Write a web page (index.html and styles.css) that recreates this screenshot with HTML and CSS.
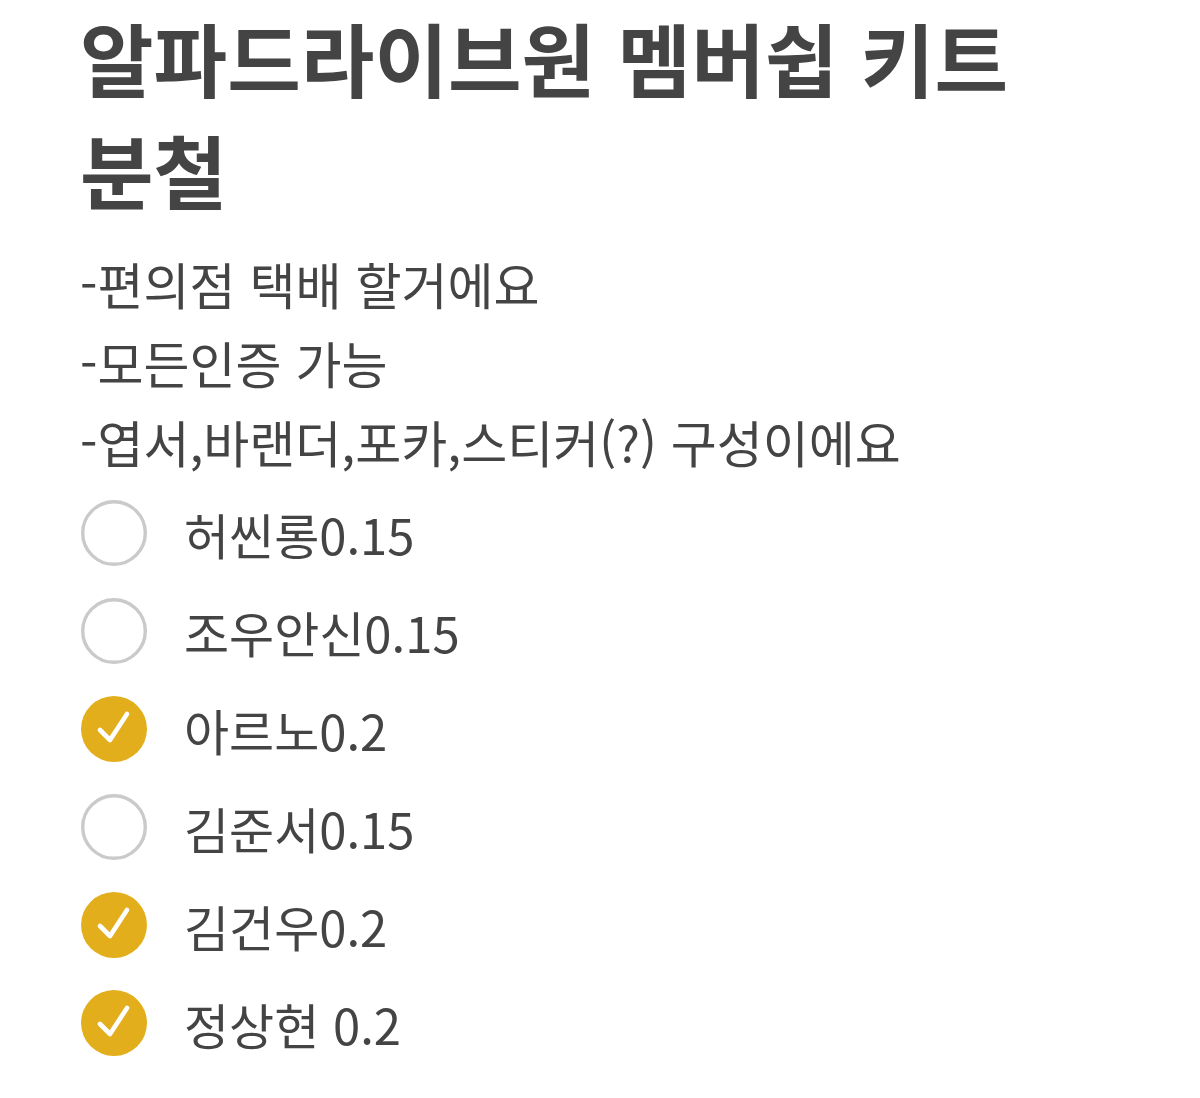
FILE: index.html
```html
<!DOCTYPE html>
<html lang="ko">
<head>
<meta charset="utf-8">
<title>알파드라이브원 멤버쉽 키트 분철</title>
<link rel="stylesheet" href="styles.css">
</head>
<body>
<main class="post">
  <h1 class="post-title">알파드라이브원 멤버쉽 키트 분철</h1>
  <div class="post-notes">
    <p class="note">-편의점 택배 할거에요</p>
    <p class="note">-모든인증 가능</p>
    <p class="note">-엽서,바랜더,포카,스티커(?) 구성이에요</p>
  </div>
  <ul class="checklist">
    <li class="check-row">
      <svg class="check-mark" viewBox="0 0 66 66"><circle class="ring" cx="33" cy="33" r="31.3"/></svg>
      <span class="check-label">허씬롱0.15</span>
    </li>
    <li class="check-row">
      <svg class="check-mark" viewBox="0 0 66 66"><circle class="ring" cx="33" cy="33" r="31.3"/></svg>
      <span class="check-label">조우안신0.15</span>
    </li>
    <li class="check-row">
      <svg class="check-mark" viewBox="0 0 66 66"><circle class="dot" cx="33" cy="33" r="33"/><polyline class="tick" points="19,34 29,44 46,18"/></svg>
      <span class="check-label">아르노0.2</span>
    </li>
    <li class="check-row">
      <svg class="check-mark" viewBox="0 0 66 66"><circle class="ring" cx="33" cy="33" r="31.3"/></svg>
      <span class="check-label">김준서0.15</span>
    </li>
    <li class="check-row">
      <svg class="check-mark" viewBox="0 0 66 66"><circle class="dot" cx="33" cy="33" r="33"/><polyline class="tick" points="19,34 29,44 46,18"/></svg>
      <span class="check-label">김건우0.2</span>
    </li>
    <li class="check-row">
      <svg class="check-mark" viewBox="0 0 66 66"><circle class="dot" cx="33" cy="33" r="33"/><polyline class="tick" points="19,34 29,44 46,18"/></svg>
      <span class="check-label">정상현 0.2</span>
    </li>
  </ul>
</main>
</body>
</html>
```
FILE: styles.css
```css
html, body {
  margin: 0;
  padding: 0;
  background: #ffffff;
}

body {
  font-family: "Noto Sans CJK KR", "Noto Sans", sans-serif;
  color: #444444;
  word-break: keep-all;
}

.post {
  padding: 0 80px;
  max-width: 1040px;
}

.post-title {
  margin: 0;
  font-size: 80px;
  font-weight: 700;
  line-height: 112px;
  color: #444444;
}

.post-notes {
  margin-top: 20px;
}

.note {
  margin: 0;
  font-size: 50px;
  line-height: 79px;
}

.checklist {
  list-style: none;
  margin: 3px 0 0;
  padding: 0;
}

.check-row {
  display: flex;
  align-items: center;
  height: 98px;
}

.check-mark {
  width: 66px;
  height: 66px;
  margin-left: 1px;
  flex: none;
}

.check-mark .ring {
  fill: none;
  stroke: #cacaca;
  stroke-width: 3.4;
}

.check-mark .dot {
  fill: #e3ae1b;
}

.check-mark .tick {
  fill: none;
  stroke: #ffffff;
  stroke-width: 4.6;
  stroke-linecap: round;
  stroke-linejoin: round;
}

.check-label {
  margin-left: 37px;
  font-size: 49px;
  line-height: 1;
}
```
